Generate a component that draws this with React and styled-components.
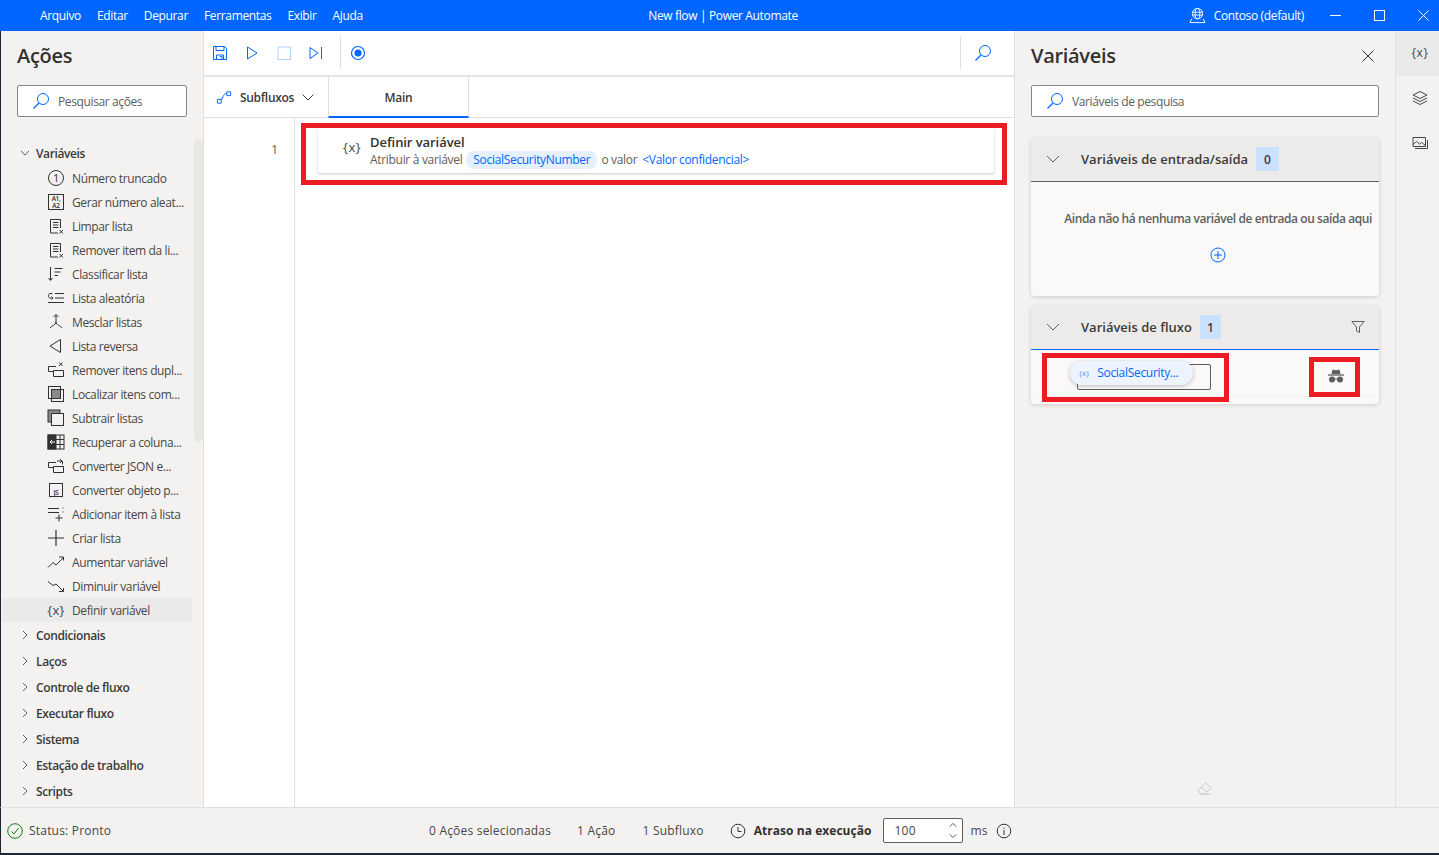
import React from "react";
import styled, { createGlobalStyle } from "styled-components";

const Global = createGlobalStyle`
  html, body { margin: 0; padding: 0; height: 100%; }
  body {
    background: #1c2533;
    font-family: "Open Sans", "Noto Sans", "Liberation Sans", sans-serif;
    font-size: 12px;
    color: #323130;
    overflow: hidden;
  }
  * { box-sizing: border-box; }
`;

const BLUE = "#0066ff";
const RED = "#ed1c24";

const Page = styled.div`
  width: 1439px;
  height: 855px;
  display: flex;
  flex-direction: column;
`;

const TitleBar = styled.header`
  height: 31px;
  flex: none;
  background: ${BLUE};
  color: #fff;
  display: grid;
  grid-template-columns: 1fr auto 1fr;
  align-items: center;
  letter-spacing: -0.35px;
`;

const Menu = styled.nav`
  display: flex;
  gap: 16px;
  padding-left: 40px;
`;

const WindowTitle = styled.div`
  padding-left: 7px;
`;

const TitleRight = styled.div`
  display: flex;
  align-items: center;
  justify-content: flex-end;
`;

const Account = styled.div`
  display: flex;
  align-items: center;
  gap: 8px;
  margin-right: 26px;
`;

const WinButtons = styled.div`
  display: flex;
  align-items: center;
  gap: 33px;
  padding-right: 10px;
`;

const Body = styled.div`
  flex: 1;
  min-height: 0;
  display: flex;
  border-left: 1px solid #1c2533;
`;

const Svg = styled.svg.attrs(p => ({
  width: p.$size || 18,
  height: p.$size || 18,
  viewBox: p.$box || "0 0 18 18",
  fill: "none",
}))`
  flex: none;
  display: block;
  stroke: ${p => p.$color || "#323130"};
  stroke-width: ${p => p.$sw || 1};
`;

const IconText = styled.text`
  font-family: "Open Sans", sans-serif;
  font-size: ${p => p.$size}px;
  font-weight: ${p => p.$weight || 400};
  fill: #323130;
  stroke: none;
  text-anchor: middle;
`;

const ActionsPanel = styled.aside`
  width: 203px;
  flex: none;
  background: #f3f2f1;
  border-right: 1px solid #e1dfdd;
  display: flex;
  flex-direction: column;
  position: relative;
`;

const PanelTitle = styled.h2`
  margin: 0;
  font-size: 20px;
  line-height: 27px;
  font-weight: 600;
  letter-spacing: -0.3px;
  color: #323130;
`;

const ActionsHead = styled.div`
  padding: 11px 16px 0;
`;

const SearchBox = styled.div`
  height: 32px;
  margin-top: 16px;
  background: #fff;
  border: 1px solid #8a8886;
  border-radius: 2px;
  display: flex;
  align-items: center;
  gap: 8px;
  padding-left: 14px;
  color: #605e5c;
  letter-spacing: -0.38px;
`;

const ActionTree = styled.div`
  margin-top: 23px;
  letter-spacing: -0.38px;
`;

const GroupRow = styled.div`
  height: 26px;
  display: flex;
  align-items: center;
  gap: 6px;
  padding-left: 19px;
  font-weight: 600;
  color: #3b3a39;
`;

const ActionRow = styled.div`
  height: 24px;
  display: flex;
  align-items: center;
  gap: 7px;
  margin: 0 11px 0 1px;
  padding-left: 45px;
  white-space: nowrap;
  background: ${p => (p.$active ? "#ebeaea" : "transparent")};
  color: #484644;
`;

const ScrollThumb = styled.div`
  position: absolute;
  left: 193px;
  top: 108px;
  width: 9px;
  height: 303px;
  border-radius: 4px;
  background: #e9e8e7;
`;

const Center = styled.main`
  flex: 1;
  min-width: 0;
  background: #fff;
  display: flex;
  flex-direction: column;
`;

const Toolbar = styled.div`
  height: 46px;
  flex: none;
  border-bottom: 2px solid #e6e5e4;
  display: flex;
  align-items: center;
`;

const ToolButton = styled.div`
  width: ${p => p.$w || 32}px;
  flex: none;
  display: flex;
  justify-content: center;
`;

const ToolSep = styled.div`
  width: 1px;
  height: 32px;
  flex: none;
  background: #e1dfdd;
  margin: ${p => p.$m || "0"};
`;

const TabRow = styled.div`
  height: 41px;
  flex: none;
  border-bottom: 1px solid #e1dfdd;
  display: flex;
  align-items: stretch;
`;

const SubflowButton = styled.div`
  width: 124px;
  flex: none;
  display: flex;
  align-items: center;
  gap: 7px;
  padding-left: 12px;
  font-weight: 600;
  letter-spacing: -0.3px;
  color: #3b3a39;
`;

const Tab = styled.div`
  width: 141px;
  flex: none;
  border-left: 1px solid #e1dfdd;
  border-right: 1px solid #e1dfdd;
  border-bottom: 2px solid ${BLUE};
  margin-bottom: -1px;
  padding-top: 1px;
  display: flex;
  align-items: center;
  justify-content: center;
  font-weight: 600;
  letter-spacing: -0.3px;
  color: #3b3a39;
`;

const Editor = styled.div`
  flex: 1;
  min-height: 0;
  display: flex;
`;

const Gutter = styled.div`
  width: 91px;
  flex: none;
  border-right: 1px solid #e1dfdd;
  padding: 23px 16px 0 0;
  text-align: right;
  color: #605e5c;
`;

const Steps = styled.div`
  flex: 1;
  min-width: 0;
  padding: 5px 7px 0 6px;
`;

const Annotated = styled.div`
  border: 5px solid ${RED};
  padding: ${p => p.$pad || "0"};
`;

const StepCard = styled.div`
  height: 45px;
  background: #fff;
  border-radius: 2px;
  box-shadow: 0 1px 3px rgba(0, 0, 0, 0.22);
  display: flex;
  align-items: center;
  padding: 2px 0 0 25px;
  gap: 9px;
  letter-spacing: -0.32px;
  white-space: nowrap;
`;

const Braces = styled.span`
  font-size: ${p => p.$size || 13}px;
  color: #484644;
  letter-spacing: 0.5px;
`;

const StepBraces = styled(Braces)`
  margin-bottom: 9px;
`;

const StepTitle = styled.div`
  font-size: 13px;
  line-height: 17px;
  font-weight: 600;
  letter-spacing: -0.07px;
  color: #323130;
`;

const StepLine = styled.div`
  display: flex;
  align-items: center;
  gap: 4px;
  line-height: 18px;
  color: #605e5c;
`;

const VarPill = styled.span`
  background: #e5f0ff;
  color: ${BLUE};
  border-radius: 8px;
  padding: 0 7px;
`;

const LinkText = styled.span`
  color: ${BLUE};
  margin-left: 1px;
`;

const VarPanel = styled.aside`
  width: 382px;
  flex: none;
  background: #f3f2f1;
  border-left: 1px solid #e1dfdd;
  border-right: 1px solid #e1dfdd;
  padding: 11px 16px 10px 16px;
  display: flex;
  flex-direction: column;
`;

const VarHead = styled.div`
  display: flex;
  align-items: center;
  justify-content: space-between;
  padding-right: 5px;
`;

const VarSection = styled.section`
  margin-top: ${p => p.$mt}px;
  background: #faf9f8;
  border-radius: 4px;
  box-shadow: 0 1px 4px rgba(0, 0, 0, 0.16);
`;

const SectionHead = styled.div`
  height: 44px;
  background: #edebe9;
  border-radius: 4px 4px 0 0;
  border-bottom: 1px solid ${p => p.$line};
  display: flex;
  align-items: center;
  padding: 0 14px 1px 15px;
  font-size: 13px;
  font-weight: 600;
  color: #3b3a39;
`;

const SectionName = styled.span`
  margin-left: 21px;
  margin-right: 8px;
`;

const Badge = styled.span`
  height: 24px;
  min-width: ${p => p.$w}px;
  background: #cce0ff;
  display: flex;
  align-items: center;
  justify-content: center;
  font-size: 12px;
`;

const EmptyBody = styled.div`
  height: 114px;
  padding: 28px 7px 0 0;
  display: flex;
  flex-direction: column;
  align-items: center;
  gap: 20px;
  font-weight: 600;
  letter-spacing: -0.42px;
  color: #605e5c;
`;

const EmptyText = styled.div`
  align-self: flex-end;
`;

const EmptyAdd = styled.div`
  padding-left: 33px;
`;

const FlowBody = styled.div`
  height: 54px;
`;

const FlowRow = styled.div`
  height: 47px;
  margin: 0 4px;
  border-bottom: 1px solid #f0efee;
  padding: 3px 15px 0 7px;
  display: flex;
  justify-content: space-between;
  align-items: flex-start;
`;

const VarCell = styled.div`
  width: 187px;
  height: 49px;
  border: 5px solid ${RED};
  position: relative;
`;

const VarSlot = styled.div`
  position: absolute;
  left: 30px;
  top: 6px;
  width: 134px;
  height: 26px;
  border: 1px solid #605e5c;
  border-radius: 2px;
`;

const DragPill = styled.div`
  position: absolute;
  left: 23px;
  top: 3px;
  width: 123px;
  height: 24px;
  background: #edf4ff;
  border-radius: 12px;
  box-shadow: 0 1px 4px rgba(0, 0, 0, 0.25);
  display: flex;
  align-items: center;
  gap: 8px;
  padding: 0 0 2px 9px;
  color: ${BLUE};
  letter-spacing: -0.3px;
  white-space: nowrap;
`;

const SmallX = styled.span`
  font-size: 8px;
  letter-spacing: 0;
  color: #5c8fe6;
`;

const SecretCell = styled.div`
  width: 51px;
  height: 40px;
  margin-top: 4px;
  padding: 0 0 2px 3px;
  border: 5px solid ${RED};
  display: flex;
  align-items: center;
  justify-content: center;
`;

const EraserWrap = styled.div`
  margin-top: auto;
  display: flex;
  justify-content: center;
  padding-right: 1px;
`;

const SideTabs = styled.div`
  width: 43px;
  flex: none;
  background: #f3f2f1;
  display: flex;
  flex-direction: column;
`;

const SideTab = styled.div`
  height: 45px;
  padding: 0 0 2px 5px;
  background: ${p => (p.$active ? "#ebeaea" : "transparent")};
  display: flex;
  align-items: center;
  justify-content: center;
`;

const StatusBar = styled.footer`
  height: 48px;
  flex: none;
  background: #f3f2f1;
  border-top: 1px solid #e1dfdd;
  border-bottom: 2px solid #1c2533;
  border-left: 1px solid #1c2533;
  display: flex;
  align-items: center;
  padding-left: 6px;
  color: #484644;
  letter-spacing: 0.2px;
`;

const StatusLeft = styled.div`
  width: 422px;
  flex: none;
  display: flex;
  align-items: center;
  gap: 6px;
`;

const Stat = styled.span`
  margin-right: ${p => p.$mr}px;
  white-space: nowrap;
`;

const DelayLabel = styled.span`
  margin-left: 8px;
  margin-right: 11px;
  font-weight: 700;
  letter-spacing: 0.05px;
  color: #323130;
`;

const Spinner = styled.div`
  width: 80px;
  height: 25px;
  background: #fff;
  border: 1px solid #605e5c;
  border-radius: 2px;
  display: flex;
  align-items: center;
  justify-content: space-between;
  padding: 0 5px 0 11px;
`;

const Chevrons = styled.div`
  display: flex;
  flex-direction: column;
  gap: 3px;
`;

const Ms = styled.span`
  margin: 0 8px;
`;

// search glass used by the panels and toolbar
const Glass = ({ size = 18 }) => (
  <Svg $size={size} $color={BLUE}>
    <circle cx="11" cy="7" r="5.5" />
    <path d="M7 11 1.5 16.5" strokeWidth="1.3" />
  </Svg>
);

const Chevron = ({ dir = "down", size = 10, color = "#605e5c" }) => {
  const d = {
    down: "M1 3 5 7 9 3",
    right: "M3 1 7 5 3 9",
    up: "M1 7 5 3 9 7",
  }[dir];
  return (
    <Svg $size={size} $box="0 0 10 10" $color={color}>
      <path d={d} />
    </Svg>
  );
};

const ListX = () => (
  <Svg>
    <path d="M3.500 16V2.500h10V11M3.500 16H11M6 5.500h5.500M6 8h5.500M6 10.500h5.500" />
    <path d="M12.500 13l3.500 3.500M16 13l-3.500 3.500" />
  </Svg>
);

const icons = {
  number: (
    <Svg>
      <circle cx="9" cy="9" r="7.500" />
      <IconText x="9" y="13" $size={11}>1</IconText>
    </Svg>
  ),
  random: (
    <Svg>
      <rect x="1.500" y="1.500" width="15" height="15" />
      <IconText x="9" y="8" $size={6.5} $weight={600}>A1,</IconText>
      <IconText x="9" y="14.500" $size={6.5} $weight={600}>A2</IconText>
    </Svg>
  ),
  clear: <ListX />,
  sort: (
    <Svg>
      <path d="M3.500 2v13M1.500 13l2 2.500 2-2.500M7.500 3.500h8M7.500 7h6M7.500 10.500h3.500" />
    </Svg>
  ),
  shuffle: (
    <Svg>
      <path d="M8 4.500h9M8 9h9M1 13.500h16M5.500 4.500H3C1 4.500 1 9 3 9h3M4.500 7.500 6 9l-1.500 1.500" />
    </Svg>
  ),
  merge: (
    <Svg>
      <path d="M9 1.500V9c0 3-5 4-6 6M9 9c0 3 5 4 6 6M6.500 4 9 1.500 11.500 4" />
    </Svg>
  ),
  reverse: (
    <Svg>
      <path d="M13.500 2.500v13L3 9z" />
    </Svg>
  ),
  dedupe: (
    <Svg>
      <path d="M9 5.500H1.500v5H6M6.500 9.500h10v6h-10z" />
      <path d="M12 1.500l3.500 3.500M15.500 1.500 12 5" />
    </Svg>
  ),
  intersect: (
    <Svg>
      <rect x="1.500" y="1.500" width="12" height="12" />
      <rect x="4.500" y="4.500" width="12" height="12" />
      <rect x="5" y="5" width="8" height="8" fill="#8a8a8a" stroke="none" />
    </Svg>
  ),
  subtract: (
    <Svg>
      <rect x="1" y="1" width="12" height="12" fill="#8a8a8a" />
      <rect x="4.500" y="4.500" width="12" height="12" fill="#f3f2f1" />
    </Svg>
  ),
  column: (
    <Svg>
      <rect x="1" y="2" width="16" height="14" />
      <rect x="1" y="2" width="8" height="14" fill="#323130" />
      <path d="M9 6.500h8M9 11.500h8M13 2v14" />
      <path d="M8 9H3M5 7 3 9l2 2" stroke="#fff" />
    </Svg>
  ),
  json: (
    <Svg>
      <path d="M9 5.500H1.500v5H6M6.500 9.500h10v6h-10z" />
      <path d="M10 4h5M13 2l2 2-2 2M15.500 4v3.500" />
    </Svg>
  ),
  jsObject: (
    <Svg>
      <rect x="2.500" y="2.500" width="13" height="13" />
      <IconText x="9" y="13.500" $size={7} $weight={600}>JS</IconText>
    </Svg>
  ),
  addItem: (
    <Svg>
      <path d="M1 3.500h11M1 7.500h11M15.500 3h1M15.500 7h1M12 9.500v7M8.500 13h7" />
    </Svg>
  ),
  createList: (
    <Svg>
      <path d="M9 1v16M1 9h16" strokeWidth="1.200" />
    </Svg>
  ),
  inc: (
    <Svg>
      <path d="M1 14.500 6 9.500l3 2.500 7-7M12 4h4.500v3.500" />
    </Svg>
  ),
  dec: (
    <Svg>
      <path d="M1 4.500 6 8.500l3-1.500 7 7M12 14.500h4.500V11" />
    </Svg>
  ),
};

const actions = [
  ["number", "Número truncado"],
  ["random", "Gerar número aleat..."],
  ["clear", "Limpar lista"],
  ["clear", "Remover item da li..."],
  ["sort", "Classificar lista"],
  ["shuffle", "Lista aleatória"],
  ["merge", "Mesclar listas"],
  ["reverse", "Lista reversa"],
  ["dedupe", "Remover itens dupl..."],
  ["intersect", "Localizar itens com..."],
  ["subtract", "Subtrair listas"],
  ["column", "Recuperar a coluna..."],
  ["json", "Converter JSON e..."],
  ["jsObject", "Converter objeto p..."],
  ["addItem", "Adicionar item à lista"],
  ["createList", "Criar lista"],
  ["inc", "Aumentar variável"],
  ["dec", "Diminuir variável"],
];

const groups = [
  "Condicionais",
  "Laços",
  "Controle de fluxo",
  "Executar fluxo",
  "Sistema",
  "Estação de trabalho",
  "Scripts",
];

const BracesIcon = styled.span`
  width: 18px;
  font-size: 13px;
  text-align: center;
  letter-spacing: 0.3px;
  color: #484644;
`;

export default function App() {
  return (
    <Page>
      <Global />
      <TitleBar>
        <Menu>
          {["Arquivo", "Editar", "Depurar", "Ferramentas", "Exibir", "Ajuda"].map(m => (
            <span key={m}>{m}</span>
          ))}
        </Menu>
        <WindowTitle>New flow | Power Automate</WindowTitle>
        <TitleRight>
          <Account>
            <Svg $size={17} $color="#fff">
              <circle cx="9" cy="7" r="5.500" />
              <ellipse cx="9" cy="7" rx="2.500" ry="5.500" />
              <path d="M3.500 5.500h11M3.500 8.500h11M3 12.500 1 16.500h16l-2-4" />
            </Svg>
            <span>Contoso (default)</span>
          </Account>
          <WinButtons>
            <Svg $size={11} $box="0 0 11 11" $color="#fff">
              <path d="M0 5.500h11" />
            </Svg>
            <Svg $size={11} $box="0 0 11 11" $color="#fff">
              <rect x=".5" y=".5" width="10" height="10" />
            </Svg>
            <Svg $size={11} $box="0 0 11 11" $color="#fff">
              <path d="M.5.5l10 10M10.500.5l-10 10" />
            </Svg>
          </WinButtons>
        </TitleRight>
      </TitleBar>

      <Body>
        <ActionsPanel>
          <ActionsHead>
            <PanelTitle>Ações</PanelTitle>
            <SearchBox>
              <Glass />
              Pesquisar ações
            </SearchBox>
          </ActionsHead>
          <ActionTree>
            <GroupRow>
              <Chevron dir="down" />
              Variáveis
            </GroupRow>
            {actions.map(([icon, label]) => (
              <ActionRow key={label}>
                {icons[icon]}
                {label}
              </ActionRow>
            ))}
            <ActionRow $active>
              <BracesIcon>{"{x}"}</BracesIcon>
              Definir variável
            </ActionRow>
            {groups.map(g => (
              <GroupRow key={g}>
                <Chevron dir="right" />
                {g}
              </GroupRow>
            ))}
          </ActionTree>
          <ScrollThumb />
        </ActionsPanel>

        <Center>
          <Toolbar>
            <ToolButton>
              <Svg $size={16} $box="0 0 16 16" $color={BLUE}>
                <path d="M1.500 1.500h11l2 2v11h-13z" />
                <path d="M4 1.500v4h8v-4M4.500 14.500v-4.500h7v4.500M8 11.500h2v3" />
              </Svg>
            </ToolButton>
            <ToolButton>
              <Svg $size={16} $box="0 0 16 16" $color={BLUE}>
                <path d="M3.500 2v12L13 8z" />
              </Svg>
            </ToolButton>
            <ToolButton>
              <Svg $size={16} $box="0 0 16 16" $color="#b3d1ff">
                <rect x="2" y="2" width="12.500" height="12.500" />
              </Svg>
            </ToolButton>
            <ToolButton>
              <Svg $size={16} $box="0 0 16 16" $color={BLUE}>
                <path d="M2 2.500v11L10 8zM13.500 2v12" />
              </Svg>
            </ToolButton>
            <ToolSep $m="0 0 0 8px" />
            <ToolButton $w={33}>
              <Svg $size={16} $box="0 0 16 16" $color={BLUE}>
                <circle cx="8" cy="8" r="6.500" strokeWidth="1.200" />
                <circle cx="8" cy="8" r="3.500" fill={BLUE} stroke="none" />
              </Svg>
            </ToolButton>
            <ToolSep $m="0 0 0 586px" />
            <ToolButton $w={44}>
              <Glass />
            </ToolButton>
          </Toolbar>
          <TabRow>
            <SubflowButton>
              <Svg $size={17} $color={BLUE}>
                <path d="M1.500 11h4v4h-4zM11.500 3h4v4h-4zM5.500 11.500 8 7c.7-1.500 1.500-2 3.500-2.300" />
              </Svg>
              Subfluxos
              <Svg $size={14} $box="0 0 14 14" $color="#484644">
                <path d="M1.500 4.500 7 10l5.500-5.500" />
              </Svg>
            </SubflowButton>
            <Tab>Main</Tab>
          </TabRow>
          <Editor>
            <Gutter>1</Gutter>
            <Steps>
              <Annotated $pad="0 8px 7px 12px">
                <StepCard>
                  <StepBraces>{"{x}"}</StepBraces>
                  <div>
                    <StepTitle>Definir variável</StepTitle>
                    <StepLine>
                      Atribuir à variável
                      <VarPill>SocialSecurityNumber</VarPill>
                      o valor
                      <LinkText>{"<Valor confidencial>"}</LinkText>
                    </StepLine>
                  </div>
                </StepCard>
              </Annotated>
            </Steps>
          </Editor>
        </Center>

        <VarPanel>
          <VarHead>
            <PanelTitle>Variáveis</PanelTitle>
            <Svg $size={12} $box="0 0 12 12">
              <path d="M.5.5l11 11M11.500.5l-11 11" />
            </Svg>
          </VarHead>
          <SearchBox>
            <Glass />
            Variáveis de pesquisa
          </SearchBox>
          <VarSection $mt={21}>
            <SectionHead $line="#605e5c">
              <Svg $size={14} $box="0 0 14 14" $color="#605e5c">
                <path d="M1 4l6 6 6-6" />
              </Svg>
              <SectionName>Variáveis de entrada/saída</SectionName>
              <Badge $w={23}>0</Badge>
            </SectionHead>
            <EmptyBody>
              <EmptyText>Ainda não há nenhuma variável de entrada ou saída aqui</EmptyText>
              <EmptyAdd>
                <Svg $size={16} $box="0 0 16 16" $color={BLUE}>
                  <circle cx="8" cy="8" r="7" />
                  <path d="M8 4v8M4 8h8" />
                </Svg>
              </EmptyAdd>
            </EmptyBody>
          </VarSection>
          <VarSection $mt={10}>
            <SectionHead $line={BLUE}>
              <Svg $size={14} $box="0 0 14 14" $color="#605e5c">
                <path d="M1 4l6 6 6-6" />
              </Svg>
              <SectionName>Variáveis de fluxo</SectionName>
              <Badge $w={21}>1</Badge>
              <Svg $size={14} $box="0 0 14 14" $color="#605e5c" style={{ marginLeft: "auto" }}>
                <path d="M.8 1.500h12.400L8.500 7v5.500l-3-1.500V7z" />
              </Svg>
            </SectionHead>
            <FlowBody>
              <FlowRow>
                <VarCell>
                  <VarSlot />
                  <DragPill>
                    <SmallX>{"{x}"}</SmallX>
                    SocialSecurity...
                  </DragPill>
                </VarCell>
                <SecretCell>
                  <Svg $size={16} $box="0 0 16 16" $color="#605e5c">
                    <path d="M3.500 6 4.500 1.500 8 2.300l3.500-.8L12.500 6z" fill="#605e5c" stroke="none" />
                    <path d="M0 7h16" strokeWidth="1.300" />
                    <circle cx="4" cy="11.500" r="3" fill="#605e5c" stroke="none" />
                    <circle cx="12" cy="11.500" r="3" fill="#605e5c" stroke="none" />
                    <path d="M6.500 11h3" />
                  </Svg>
                </SecretCell>
              </FlowRow>
            </FlowBody>
          </VarSection>
          <EraserWrap>
            <Svg $size={17} $color="#c8c6c4">
              <path d="M2 11 10 3l6 5-6.500 7H5zM5.500 7.500l6 5M5 15h10" />
            </Svg>
          </EraserWrap>
        </VarPanel>

        <SideTabs>
          <SideTab $active>
            <Braces $size={12}>{"{x}"}</Braces>
          </SideTab>
          <SideTab>
            <Svg $size={16} $box="0 0 16 16" $color="#484644">
              <path d="M8 1.500 15 5 8 8.500 1 5zM1 8l7 3.500L15 8M1 11l7 3.500 7-3.500" />
            </Svg>
          </SideTab>
          <SideTab>
            <Svg $size={16} $box="0 0 16 16" $color="#484644">
              <path d="M1 2.500h12.500v9H1zM1 9.500l3.500-3 3 2.500 2-1.500 4 3M3 13.500h12.500V5" />
            </Svg>
          </SideTab>
        </SideTabs>
      </Body>

      <StatusBar>
        <StatusLeft>
          <Svg $size={16} $box="0 0 16 16" $color="#107c10">
            <circle cx="8" cy="8" r="7.300" />
            <path d="M4.500 8.500 7 11l4.500-6" />
          </Svg>
          Status: Pronto
        </StatusLeft>
        <Stat $mr={26}>0 Ações selecionadas</Stat>
        <Stat $mr={27}>1 Ação</Stat>
        <Stat $mr={26}>1 Subfluxo</Stat>
        <Svg $size={16} $box="0 0 16 16">
          <circle cx="8" cy="8" r="6.800" />
          <path d="M8 4v4.500h3.500" />
        </Svg>
        <DelayLabel>Atraso na execução</DelayLabel>
        <Spinner>
          100
          <Chevrons>
            <Chevron dir="up" size={8} color="#323130" />
            <Chevron dir="down" size={8} color="#323130" />
          </Chevrons>
        </Spinner>
        <Ms>ms</Ms>
        <Svg $size={16} $box="0 0 16 16">
          <circle cx="8" cy="8" r="6.800" />
          <path d="M8 7v5M8 4.500v1.200" />
        </Svg>
      </StatusBar>
    </Page>
  );
}
